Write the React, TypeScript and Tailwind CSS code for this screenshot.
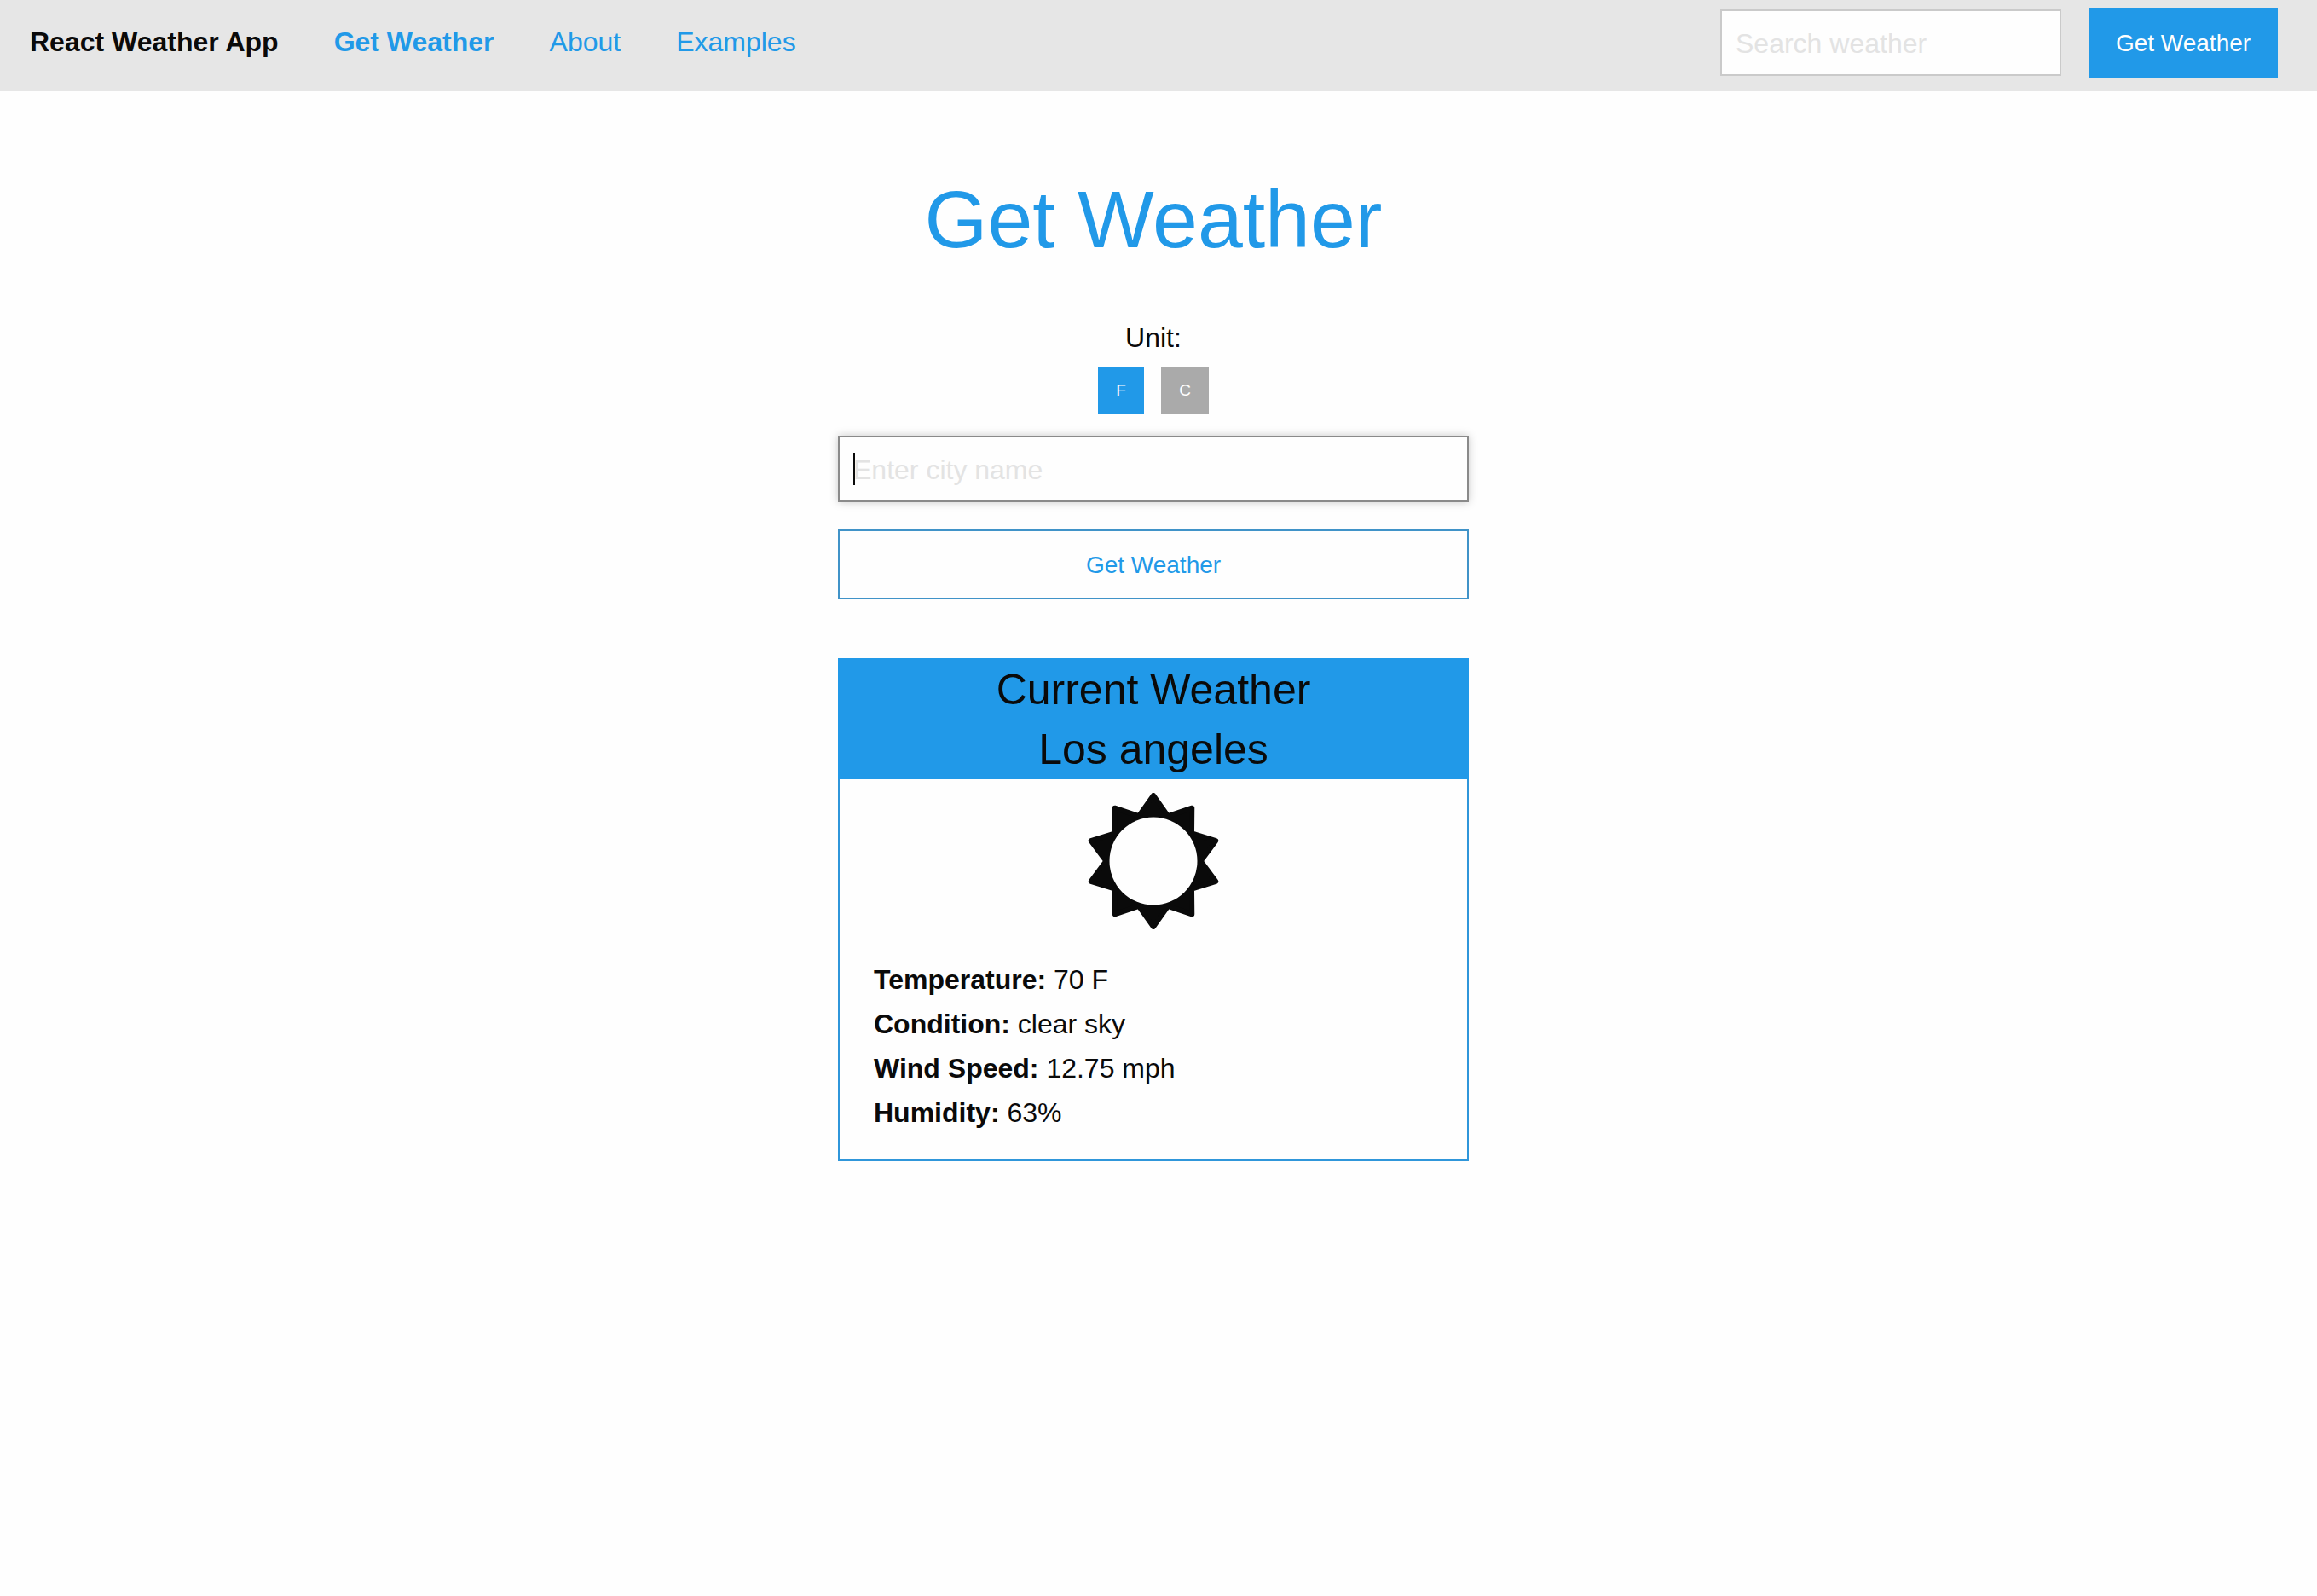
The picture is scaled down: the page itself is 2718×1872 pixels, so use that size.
import React from "react";

const navLinks = [
  { label: "Get Weather", active: true },
  { label: "About", active: false },
  { label: "Examples", active: false },
];

const readings = [
  { name: "Temperature", value: "70 F" },
  { name: "Condition", value: "clear sky" },
  { name: "Wind Speed", value: "12.75 mph" },
  { name: "Humidity", value: "63%" },
];

const rays = Array.from({ length: 20 }, (_, i) => {
  const radius = i % 2 === 0 ? 77 : 55.6;
  const angle = (i * Math.PI) / 10;
  return `${(radius * Math.sin(angle)).toFixed(2)},${(-radius * Math.cos(angle)).toFixed(2)}`;
}).join(" ");

function SunIcon() {
  return (
    <svg viewBox="-80 -80 160 160" className="size-40" role="img" aria-label="Sunny">
      <polygon points={rays} fill="#0a0a0a" stroke="#0a0a0a" strokeWidth="6" strokeLinejoin="round" />
      <circle r="51.5" fill="#fefefe" />
    </svg>
  );
}

function NavBar() {
  return (
    <header className="flex items-start justify-between bg-[#e6e6e6] pb-4 pl-[35px] pr-[46px] pt-[9px] text-[32px] leading-[36px]">
      <nav className="flex items-center gap-[65px] pt-[22px]">
        <span className="font-bold">React Weather App</span>
        {navLinks.map((link) => (
          <a
            key={link.label}
            href="#"
            className={link.active ? "font-bold text-[#2199e8]" : "text-[#2199e8]"}
          >
            {link.label}
          </a>
        ))}
      </nav>
      <form className="flex items-center gap-8">
        <input
          type="search"
          aria-label="Search weather"
          placeholder="Search weather"
          className="h-[78px] w-[400px] border-2 border-[#cacaca] bg-[#fefefe] px-4 pt-0.5 outline-none placeholder:text-[#e3e3e3]"
        />
        <button type="button" className="h-[82px] w-[222px] bg-[#2199e8] pt-0.5 text-[28px] text-[#fefefe]">
          Get Weather
        </button>
      </form>
    </header>
  );
}

function WeatherCard() {
  return (
    <section className="mt-[69px] border-2 border-[#2f96da]">
      <h2 className="-mx-0.5 -mt-0.5 bg-[#2199e8] pt-0.5 text-center text-[50px] leading-[70px]">
        Current Weather
        <br />
        Los angeles
      </h2>
      <div className="flex justify-center pt-4">
        <SunIcon />
      </div>
      <dl className="px-10 pb-[29px] pt-[33px] text-[32px] leading-[52px]">
        {readings.map((r) => (
          <div key={r.name}>
            <dt className="inline font-bold">{r.name}:</dt> <dd className="inline">{r.value}</dd>
          </div>
        ))}
      </dl>
    </section>
  );
}

export default function App() {
  return (
    <div className="min-h-screen bg-[#fefefe] font-['Liberation_Sans',Arial,sans-serif] text-[#0a0a0a]">
      <NavBar />
      <main className="pr-3">
        <div className="mx-auto max-w-[740px]">
          <h1 className="pt-[82px] text-center text-[95px] leading-[136px] text-[#2199e8]">Get Weather</h1>
          <div className="pt-[45px] text-center text-[32px] leading-[52px]" id="unit-label">
            Unit:
          </div>
          <div className="mt-2 flex justify-center gap-5" role="group" aria-labelledby="unit-label">
            <button type="button" className="h-14 w-[54px] bg-[#2199e8] text-[19px] text-[#fefefe]">
              F
            </button>
            <button type="button" className="h-14 w-14 bg-[#aaaaaa] text-[19px] text-[#fefefe]">
              C
            </button>
          </div>
          <form>
            <div className="relative mt-[25px]">
              <input
                type="text"
                aria-label="City name"
                placeholder="Enter city name"
                className="block h-[78px] w-full border-2 border-[#8a8a8a] bg-[#fefefe] px-4 pt-0.5 text-[32px] shadow-[0_0_10px_#cacaca] outline-none placeholder:text-[#e3e3e3]"
              />
              <span className="absolute left-[18px] top-5 h-[38px] w-0.5 bg-[#0a0a0a]" />
            </div>
            <button
              type="button"
              className="mt-8 block h-[82px] w-full border-2 border-[#4093c8] pt-0.5 text-[28px] text-[#2199e8]"
            >
              Get Weather
            </button>
          </form>
          <WeatherCard />
        </div>
      </main>
    </div>
  );
}
